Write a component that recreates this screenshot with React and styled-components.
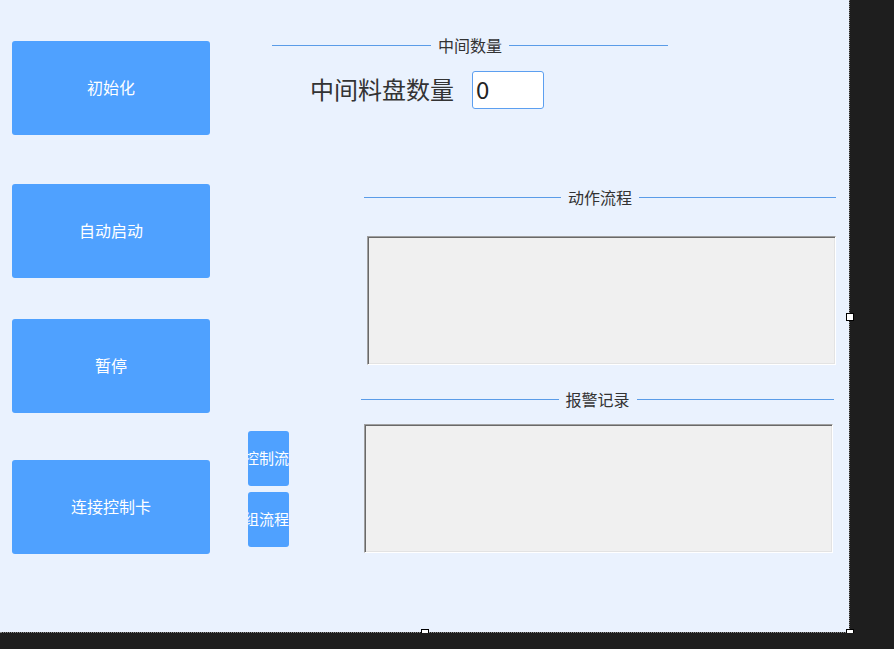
import React from 'react';
import styled, { createGlobalStyle } from 'styled-components';

const GlobalStyle = createGlobalStyle`
  html, body {
    margin: 0;
    padding: 0;
    background: #1e1e1e;
  }
  body {
    font-family: "Noto Sans CJK SC", "Noto Sans", sans-serif;
  }
`;

const DesignSurface = styled.div`
  position: relative;
  width: 850px;
  height: 633px;
  border-right: 1px dotted #8a8a8a;
  border-bottom: 1px dotted #8a8a8a;
  box-sizing: border-box;
`;

const Form = styled.div`
  display: flex;
  width: 849px;
  height: 632px;
  padding-left: 12px;
  box-sizing: border-box;
  background: #eaf2fe;
  overflow: hidden;
`;

const Handle = styled.span`
  position: absolute;
  width: 6px;
  height: 6px;
  background: #fff;
  border: 1px solid #000;
  left: ${p => p.$x - 4}px;
  top: ${p => p.$y - 4}px;
`;

const LeftColumn = styled.div`
  display: flex;
  flex-direction: column;
  width: 198px;
  flex-shrink: 0;
`;

const ActionButton = styled.button`
  display: flex;
  align-items: center;
  justify-content: center;
  width: 198px;
  height: 94px;
  margin-top: ${p => p.$top}px;
  padding: 0 0 3px;
  border: none;
  border-radius: 3px;
  background: #4fa1ff;
  color: #fff;
  font-family: inherit;
  font-size: 16px;
`;

const RightArea = styled.div`
  display: flex;
  flex-direction: column;
  margin-left: 38px;
  padding-top: 37px;
`;

const DividerHeader = styled.div`
  display: flex;
  align-items: center;
  height: 16px;
  width: ${p => p.$width}px;
  margin-left: ${p => p.$indent || 0}px;
`;

const DividerLine = styled.span`
  flex: 1;
  height: 1px;
  background: #5a9ce8;
`;

const DividerLabel = styled.span`
  padding: 0 7px;
  font-size: 16px;
  line-height: 16px;
  color: #333;
  white-space: nowrap;
`;

const CountRow = styled.div`
  display: flex;
  align-items: center;
  gap: 18px;
  height: 38px;
  margin-top: 18px;
  padding-left: 62px;
`;

const CountLabel = styled.span`
  font-size: 24px;
  line-height: 35px;
  padding-bottom: 3px;
  color: #333;
  white-space: nowrap;
`;

const CountInput = styled.input`
  width: 72px;
  height: 38px;
  box-sizing: border-box;
  border: 1px solid #5c9ff0;
  border-radius: 3px;
  background: #fff;
  padding: 0 0 3px 3px;
  font-family: inherit;
  font-size: 24px;
  color: #222;
  outline: none;
`;

const LowerRow = styled.div`
  display: flex;
  align-items: flex-start;
  margin-top: 80px;
`;

const SmallColumn = styled.div`
  display: flex;
  flex-direction: column;
  gap: 6px;
  padding-top: 242px;
`;

const SmallButton = styled.button`
  display: flex;
  align-items: center;
  justify-content: flex-end;
  width: 41px;
  height: 55px;
  padding: 0 0 3px;
  border: none;
  border-radius: 3px;
  background: #4fa1ff;
  color: #fff;
  font-family: inherit;
  font-size: 15px;
  white-space: nowrap;
  overflow: hidden;
`;

const LogsColumn = styled.div`
  display: flex;
  flex-direction: column;
  margin-left: 72px;
`;

const LogSection = styled.div`
  display: flex;
  flex-direction: column;
  margin-top: ${p => p.$top || 0}px;
`;

const LogBox = styled.div`
  width: 469px;
  height: 129px;
  box-sizing: border-box;
  margin-top: ${p => p.$gap}px;
  margin-left: ${p => p.$indent}px;
  background: #f0f0f0;
  border-top: 1px solid #a0a0a0;
  border-left: 1px solid #a0a0a0;
  border-bottom: 1px solid #fff;
  border-right: 1px solid #fff;
  box-shadow: inset 1px 1px 0 #696969, inset -1px -1px 0 #e3e3e3;
`;

const Divider = ({ label, width, indent }) => (
  <DividerHeader $width={width} $indent={indent}>
    <DividerLine />
    <DividerLabel>{label}</DividerLabel>
    <DividerLine />
  </DividerHeader>
);

const mainButtons = [
  { label: '初始化', top: 41 },
  { label: '自动启动', top: 49 },
  { label: '暂停', top: 41 },
  { label: '连接控制卡', top: 47 },
];

export default function App() {
  return (
    <>
      <GlobalStyle />
      <DesignSurface>
        <Form>
          <LeftColumn>
            {mainButtons.map(b => (
              <ActionButton key={b.label} $top={b.top}>{b.label}</ActionButton>
            ))}
          </LeftColumn>

          <RightArea>
            <Divider label="中间数量" width={396} indent={24} />
            <CountRow>
              <CountLabel>中间料盘数量</CountLabel>
              <CountInput defaultValue="0" />
            </CountRow>

            <LowerRow>
              <SmallColumn>
                <SmallButton>控制流</SmallButton>
                <SmallButton>组流程</SmallButton>
              </SmallColumn>

              <LogsColumn>
                <LogSection>
                  <Divider label="动作流程" width={472} indent={3} />
                  <LogBox $gap={31} $indent={6} />
                </LogSection>
                <LogSection $top={26}>
                  <Divider label="报警记录" width={473} />
                  <LogBox $gap={17} $indent={3} />
                </LogSection>
              </LogsColumn>
            </LowerRow>
          </RightArea>
        </Form>
        <Handle $x={850} $y={317} />
        <Handle $x={425} $y={633} />
        <Handle $x={850} $y={633} />
      </DesignSurface>
    </>
  );
}
